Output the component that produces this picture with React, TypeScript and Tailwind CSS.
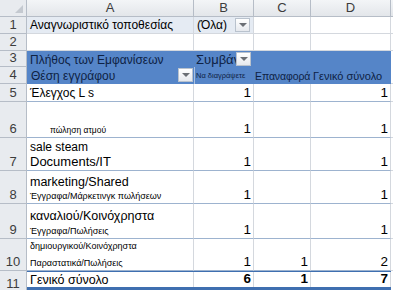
import React from 'react';

const font = { fontFamily: '"Liberation Sans", Arial, sans-serif' };

const rowHeights = [17, 17, 16, 17, 18, 36, 33, 33, 35, 32, 22];

const DropButton = ({ className = '' }: { className?: string }) => (
  <div
    className={`absolute flex h-[14px] w-[15px] items-center justify-center border border-[#b9c2cd] bg-gradient-to-b from-[#ffffff] to-[#e6e9ee] ${className}`}
  >
    <div className="h-0 w-0 border-x-[4px] border-t-[4px] border-x-transparent border-t-[#6b6f75]" />
  </div>
);

const RowHead = ({ n, h }: { n: number; h: number }) => (
  <div
    className="flex w-[27px] shrink-0 items-end justify-center border-r border-b border-[#b6bdc7] bg-[#e8ebef] pb-[1px] text-[13px] leading-[15px] text-[#3c3c3c]"
    style={{ height: h }}
  >
    {n}
  </div>
);

type BodyRow = {
  n: number;
  a: React.ReactNode;
  b?: string;
  c?: string;
  d?: string;
};

const body: BodyRow[] = [
  { n: 5, a: <span className="text-[12px] leading-[14px]">Έλεγχος L s</span>, b: '1', d: '1' },
  {
    n: 6,
    a: <span className="pl-[20px] text-[8.5px] leading-[11px]">πώληση ατμού</span>,
    b: '1',
    d: '1',
  },
  {
    n: 7,
    a: (
      <>
        <span className="text-[12px] leading-[14px]">sale steam</span>
        <span className="text-[13px] leading-[15px]">Documents/IT</span>
      </>
    ),
    b: '1',
    d: '1',
  },
  {
    n: 8,
    a: (
      <>
        <span className="text-[12.5px] leading-[16px]">marketing/Shared</span>
        <span className="text-[9px] leading-[12px]">Έγγραφα/Μάρκετινγκ πωλήσεων</span>
      </>
    ),
    b: '1',
    d: '1',
  },
  {
    n: 9,
    a: (
      <>
        <span className="text-[12.5px] leading-[17px]">καναλιού/Κοινόχρηστα</span>
        <span className="text-[9px] leading-[12px]">Έγγραφα/Πωλήσεις</span>
      </>
    ),
    b: '1',
    d: '1',
  },
  {
    n: 10,
    a: (
      <>
        <span className="text-[9px] leading-[14px]">δημιουργικού/Κοινόχρηστα</span>
        <span className="mt-[4px] text-[9px] leading-[12px]">Παραστατικά/Πωλήσεις</span>
      </>
    ),
    b: '1',
    c: '1',
    d: '2',
  },
];

const Num = ({ v, w }: { v?: string; w: string }) => (
  <div
    className={`flex shrink-0 items-end justify-end border-r border-b border-r-[#d4d8de] border-b-[#9db3cf] pr-[2px] text-[13.5px] leading-[16px] ${w}`}
  >
    {v}
  </div>
);

export default function App() {
  return (
    <div className="h-[290px] w-[393px] overflow-hidden bg-white text-black" style={font}>
      {/* column headers */}
      <div className="flex h-[17px]">
        <div className="relative w-[27px] shrink-0 border-r border-b border-[#b6bdc7] bg-[#e8ebef]">
          <div className="absolute right-[3px] bottom-[3px] h-0 w-0 border-l-[8px] border-b-[8px] border-l-transparent border-b-[#c4c9d0]" />
        </div>
        {[
          ['A', 'w-[167px]'],
          ['B', 'w-[60px]'],
          ['C', 'w-[57px]'],
          ['D', 'w-[80px]'],
        ].map(([l, w]) => (
          <div
            key={l}
            className={`flex shrink-0 items-center justify-center border-r border-b border-[#b6bdc7] bg-gradient-to-b from-[#f3f5f7] to-[#e3e6ea] text-[13px] text-[#3c3c3c] ${w}`}
          >
            {l}
          </div>
        ))}
        <div className="flex-1 border-b border-[#b6bdc7] bg-gradient-to-b from-[#f3f5f7] to-[#e3e6ea]" />
      </div>

      {/* row 1 */}
      <div className="flex h-[17px]">
        <RowHead n={1} h={17} />
        <div className="flex w-[167px] shrink-0 items-end border-r border-b border-[#d4d8de] bg-[#e5ebf3] pb-[1px] pl-[3px] text-[12px] leading-[14px]">
          Αναγνωριστικό τοποθεσίας
        </div>
        <div className="relative flex w-[60px] shrink-0 items-end border-r border-b border-[#d4d8de] bg-[#e5ebf3] pb-[1px] pl-[3px] text-[12px] leading-[14px]">
          (Όλα)
          <DropButton className="top-[1px] right-[3px]" />
        </div>
        <div className="w-[57px] shrink-0 border-r border-b border-[#d4d8de]" />
        <div className="w-[80px] shrink-0 border-r border-b border-[#d4d8de]" />
        <div className="flex-1 border-b border-[#d4d8de]" />
      </div>

      {/* row 2 */}
      <div className="flex h-[17px]">
        <RowHead n={2} h={17} />
        <div className="w-[167px] shrink-0 border-r border-b border-[#d4d8de]" />
        <div className="w-[60px] shrink-0 border-r border-b border-[#d4d8de]" />
        <div className="w-[57px] shrink-0 border-r border-b border-[#d4d8de]" />
        <div className="w-[80px] shrink-0 border-r border-b border-[#d4d8de]" />
        <div className="flex-1 border-b border-[#d4d8de]" />
      </div>

      {/* rows 3-4: blue header */}
      <div className="flex">
        <div className="flex flex-col">
          <RowHead n={3} h={16} />
          <RowHead n={4} h={17} />
        </div>
        <div className="flex w-[364px] shrink-0 flex-col bg-[#5585c8] text-[#0e2244]">
          <div className="flex h-[16px]">
            <div className="flex w-[167px] shrink-0 items-end pl-[3px] text-[12px] leading-[14px]">
              Πλήθος των Εμφανίσεων
            </div>
            <div className="relative flex w-[60px] shrink-0 items-end pl-[2px] text-[13px] leading-[14px]">
              Συμβάν
              <DropButton className="top-[1px] right-[3px]" />
            </div>
            <div className="flex-1" />
          </div>
          <div className="flex h-[17px]">
            <div className="relative flex w-[167px] shrink-0 items-end pb-[1px] pl-[4px] text-[12px] leading-[14px]">
              Θέση εγγράφου
              <DropButton className="top-[1px] right-[1px]" />
            </div>
            <div className="flex w-[60px] shrink-0 items-end overflow-hidden whitespace-nowrap border-l border-[#a9c0e0] pb-[4px] pl-[1px] text-[7.5px] leading-[9px]">
              Να διαγράψετε
            </div>
            <div className="flex w-[57px] shrink-0 items-end whitespace-nowrap pb-[1px] pl-[1px] text-[10.5px] leading-[14px] tracking-[-0.1px]">
              Επαναφορά
            </div>
            <div className="flex w-[80px] shrink-0 items-end whitespace-nowrap pb-[1px] pl-[2px] text-[11px] leading-[14px]">
              Γενικό σύνολο
            </div>
          </div>
        </div>
        <div className="flex-1 border-b border-[#d4d8de]" />
      </div>

      {/* body rows */}
      {body.map((r, i) => {
        const h = rowHeights[i + 4];
        return (
          <div key={r.n} className="flex" style={{ height: h }}>
            <RowHead n={r.n} h={h} />
            <div className="flex w-[167px] shrink-0 flex-col justify-end overflow-hidden whitespace-nowrap border-r border-b border-r-[#d4d8de] border-b-[#9db3cf] pb-[1px] pl-[3px]">
              {r.a}
            </div>
            <Num v={r.b} w="w-[60px]" />
            <Num v={r.c} w="w-[57px]" />
            <Num v={r.d} w="w-[80px]" />
            <div className="flex-1 border-b border-[#d4d8de]" />
          </div>
        );
      })}

      {/* row 11: grand total */}
      <div className="flex h-[22px]">
        <RowHead n={11} h={22} />
        <div className="flex h-[20px] w-[364px] shrink-0 overflow-hidden border-t border-b-[4px] border-t-[#3f6fb0] border-b-[#3f6fb0]">
          <div className="flex w-[167px] shrink-0 items-end border-r border-[#d4d8de] pl-[3px] text-[12.5px] leading-[14px]">
            Γενικό σύνολο
          </div>
          {[
            ['6', 'w-[60px]'],
            ['1', 'w-[57px]'],
            ['7', 'w-[80px]'],
          ].map(([v, w]) => (
            <div
              key={w}
              className={`flex shrink-0 items-start justify-end border-r border-[#d4d8de] pr-[2px] text-[13.5px] font-bold leading-[14px] ${w}`}
            >
              {v}
            </div>
          ))}
        </div>
        <div className="flex-1" />
      </div>
    </div>
  );
}
